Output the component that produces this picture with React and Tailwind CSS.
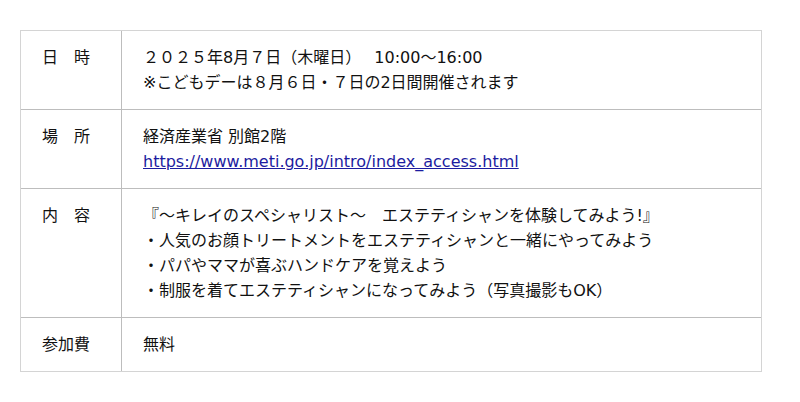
const rows = [
  {
    label: "日　時",
    lines: [
      "２０２５年8月７日（木曜日）　 10:00～16:00",
      "※こどもデーは８月６日・７日の2日間開催されます",
    ],
  },
  {
    label: "場　所",
    lines: ["経済産業省 別館2階", "link"],
  },
  {
    label: "内　容",
    lines: [
      "『～キレイのスペシャリスト～　エステティシャンを体験してみよう!』",
      "・人気のお顔トリートメントをエステティシャンと一緒にやってみよう",
      "・パパやママが喜ぶハンドケアを覚えよう",
      "・制服を着てエステティシャンになってみよう（写真撮影もOK）",
    ],
  },
  { label: "参加費", lines: ["無料"] },
];

export default function App() {
  return (
    <div
      className="w-[800px] h-[402px] bg-white pt-[30px] pl-[20px] text-[#111]"
      style={{ fontFamily: '"DejaVu Sans", "Noto Sans CJK JP", sans-serif' }}
    >
      <div className="w-[742px] border border-[#d4d4d4]">
        {rows.map((row, i) => (
          <div
            key={row.label}
            className={`flex ${i > 0 ? "border-t border-[#bdbdbd]" : ""}`}
          >
            <div className="w-[101px] shrink-0 border-r border-[#bdbdbd] pl-[21px] py-[14px] text-[16px] leading-[25px]">
              {row.label}
            </div>
            <div className="pl-[21px] py-[14px] text-[16px] leading-[25px]">
              {row.lines.map((line) =>
                line === "link" ? (
                  <div key={line}>
                    <a href="#" className="text-[#1c1ca0] underline">
                      https://www.meti.go.jp/intro/index_access.html
                    </a>
                  </div>
                ) : (
                  <div key={line} className="whitespace-pre">
                    {line}
                  </div>
                )
              )}
            </div>
          </div>
        ))}
      </div>
    </div>
  );
}
